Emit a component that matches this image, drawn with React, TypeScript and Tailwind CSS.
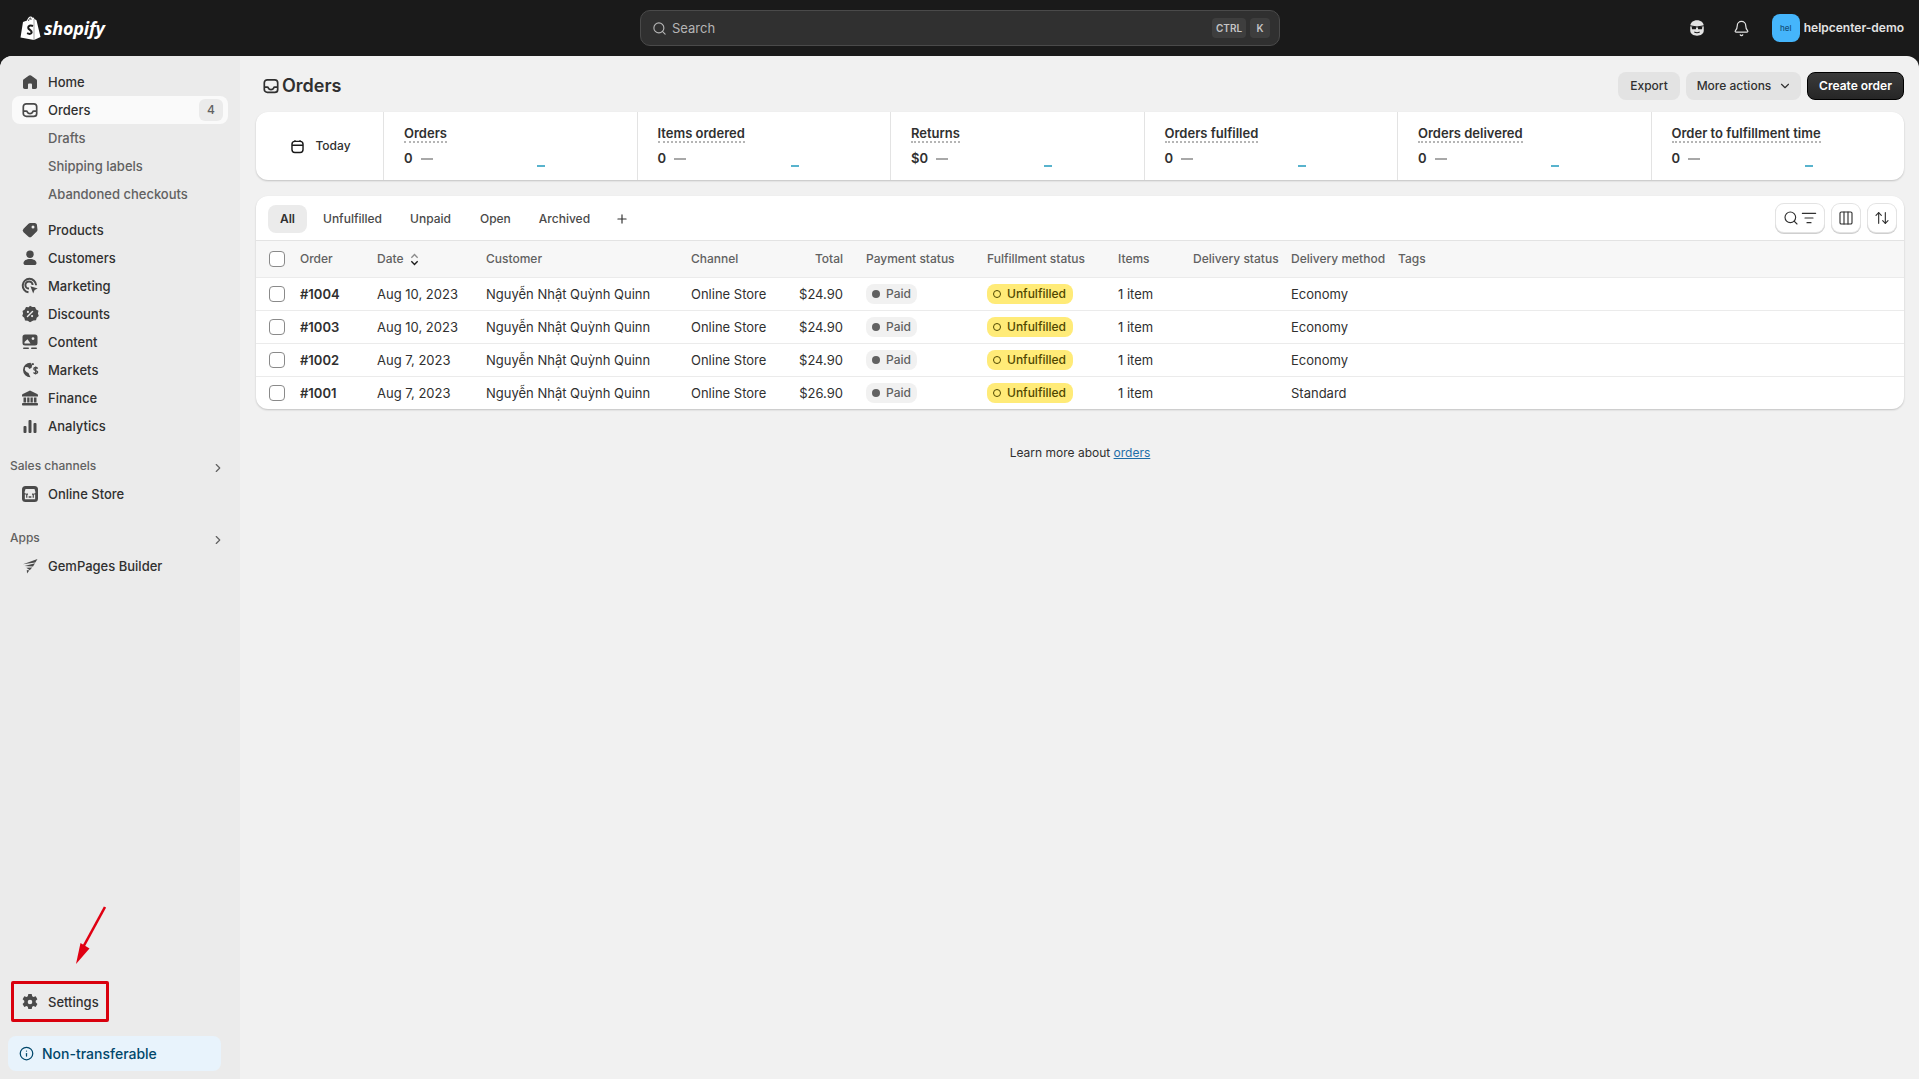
import React from "react";
import { Search, Bell, ChevronRight, ChevronDown, Plus, Info, ListFilter, Columns3, ArrowUpDown } from "lucide-react";

type IconProps = { className?: string };

const HomeIcon = ({ className }: IconProps) => (
  <svg viewBox="0 0 20 20" className={className} fill="currentColor">
    <path d="M11.030 3.560a1.750 1.750 0 0 0-2.060 0l-5.250 3.810A1.750 1.750 0 0 0 3 8.790v6.460C3 16.220 3.780 17 4.750 17h2.500c.410 0 .750-.340.750-.750v-3.500c0-.690.560-1.250 1.250-1.250h1.500c.690 0 1.250.560 1.250 1.250v3.500c0 .410.340.750.750.750h2.500c.970 0 1.750-.780 1.750-1.750V8.790c0-.560-.270-1.090-.720-1.420z" />
  </svg>
);
const OrdersIcon = ({ className }: IconProps) => (
  <svg viewBox="0 0 20 20" className={className} fill="none" stroke="currentColor" strokeWidth="1.700">
    <rect x="3.300" y="3.800" width="13.400" height="12.600" rx="3" />
    <path d="M3.500 11.200h2.800c.600 0 .900.400 1.100.900.400 1 1.400 1.600 2.600 1.600s2.200-.600 2.600-1.600c.200-.500.500-.900 1.100-.900h2.800" />
  </svg>
);
const TagIcon = ({ className }: IconProps) => (
  <svg viewBox="0 0 20 20" className={className} fill="currentColor">
    <path fillRule="evenodd" d="M17 5.500A2.500 2.500 0 0 0 14.500 3h-4.200c-.660 0-1.300.260-1.770.730l-5 5a2.500 2.500 0 0 0 0 3.540l4.700 4.200a2.500 2.500 0 0 0 3.540 0l5-5c.470-.470.730-1.100.730-1.770zM13 8.500a1.500 1.500 0 1 0 0-3 1.500 1.500 0 0 0 0 3z" />
  </svg>
);
const PersonIcon = ({ className }: IconProps) => (
  <svg viewBox="0 0 20 20" className={className} fill="currentColor">
    <circle cx="10" cy="6.200" r="3.700" />
    <path d="M3.500 15.200c0-2.600 2.900-4.200 6.500-4.200s6.500 1.600 6.500 4.200c0 1.200-.900 1.800-2 1.800h-9c-1.100 0-2-.600-2-1.800z" />
  </svg>
);
const MarketingIcon = ({ className }: IconProps) => (
  <svg viewBox="0 0 20 20" className={className} fill="none" stroke="currentColor" strokeWidth="2">
    <path d="M8.500 16.200a6.700 6.700 0 1 1 7.600-7" />
    <path d="M9 12.600a3.600 3.600 0 1 1 3.600-3.600" />
    <path d="M10.400 10.200l7.300 2.400-3.100 1.500-1.400 3.300z" fill="currentColor" stroke="none" />
  </svg>
);
const DiscountIcon = ({ className }: IconProps) => (
  <svg viewBox="0 0 20 20" className={className}>
    <path fill="currentColor" d="M10 1.800l2.300 1.300 2.700-.100 1.200 2.500 2.300 1.300-.600 2.700.900 2.500-2.100 1.700-.700 2.600-2.700.300L10 18.200l-2.300-1.500-2.700-.300-.700-2.600-2.100-1.700.900-2.500-.600-2.700 2.300-1.300 1.200-2.500 2.700.100z" />
    <path d="M12.500 7.500l-5 5" stroke="#ebebeb" strokeWidth="1.500" strokeLinecap="round" />
    <circle cx="7.900" cy="7.900" r="1.100" fill="#ebebeb" />
    <circle cx="12.100" cy="12.100" r="1.100" fill="#ebebeb" />
  </svg>
);
const ContentIcon = ({ className }: IconProps) => (
  <svg viewBox="0 0 20 20" className={className} fill="currentColor">
    <path fillRule="evenodd" d="M5 2.500h10A2.500 2.500 0 0 1 17.500 5v6a2.500 2.500 0 0 1-2.500 2.500H5A2.500 2.500 0 0 1 2.500 11V5A2.500 2.500 0 0 1 5 2.500zm8 2.700a1.400 1.400 0 1 0 0 2.800 1.400 1.400 0 0 0 0-2.800zM4.500 11.500h6L7.500 7.200l-3 2.800z" />
    <rect x="3" y="15.500" width="6" height="1.600" rx=".800" />
    <rect x="11" y="15.500" width="6" height="1.600" rx=".800" />
  </svg>
);
const MarketsIcon = ({ className }: IconProps) => (
  <svg viewBox="0 0 20 20" className={className} fill="currentColor">
    <path d="M10.500 2.800A7.300 7.300 0 0 0 3 10a7.300 7.300 0 0 0 7.500 7.200l-.900-1.600-1.100-2.500-2-1-1.700-2.200.500-3 2.700.400 1.400 1.800 2.200-1.300.500-2.500z" />
    <path d="M11.500 5.600a5 5 0 0 1 2.500-.900V3.500a7 7 0 0 0-2.200-.500z" />
    <path d="M17.600 8.600c-.400-.800-1-1.100-1.900-1.100-1.100 0-1.900.600-1.900 1.500 0 2 3.900 1.100 3.900 3.100 0 .900-.800 1.500-2 1.500-1 0-1.700-.400-2.100-1.200M15.700 6.400v8.200" fill="none" stroke="currentColor" strokeWidth="1.300" />
  </svg>
);
const FinanceIcon = ({ className }: IconProps) => (
  <svg viewBox="0 0 20 20" className={className} fill="currentColor">
    <path d="M10 2.500l7.200 3.600c.500.300.800.700.800 1.200V8.500H2V7.300c0-.500.300-.900.800-1.200z" />
    <rect x="3.500" y="9.500" width="2.600" height="5" />
    <rect x="7.200" y="9.500" width="2.300" height="5" />
    <rect x="10.500" y="9.500" width="2.300" height="5" />
    <rect x="13.900" y="9.500" width="2.600" height="5" />
    <rect x="2" y="15" width="16" height="2.500" rx=".800" />
  </svg>
);
const AnalyticsIcon = ({ className }: IconProps) => (
  <svg viewBox="0 0 20 20" className={className} fill="currentColor">
    <rect x="3.500" y="10" width="3" height="7" rx=".900" />
    <rect x="8.500" y="4" width="3" height="13" rx=".900" />
    <rect x="13.500" y="7" width="3" height="10" rx=".900" />
  </svg>
);
const StoreIcon = ({ className }: IconProps) => (
  <svg viewBox="0 0 20 20" className={className}>
    <rect x="2" y="2" width="16" height="16" rx="3.500" fill="currentColor" />
    <path d="M5.500 5h9l1 3.200a1.700 1.700 0 0 1-3 .800 2 2 0 0 1-5 0 1.700 1.700 0 0 1-3-.800z" fill="#ebebeb" />
    <path d="M5.500 10.500v4h9v-4M8 14.500v-2.800h4v2.800" fill="none" stroke="#ebebeb" strokeWidth="1.300" />
  </svg>
);
const GemIcon = ({ className }: IconProps) => (
  <svg viewBox="0 0 20 20" className={className} fill="currentColor">
    <path d="M17.500 3l-2.200 3.400L3 8.200z" />
    <path d="M15 7.300L13 10.600 4.500 10z" />
    <path d="M12.200 11.400l-2.400 2.800-3.500-2.400z" />
    <path d="M9.300 14.600L7 17.500l-.200-3.600z" />
  </svg>
);
const GearIcon = ({ className }: IconProps) => (
  <svg viewBox="0 0 20 20" className={className} fill="currentColor">
    <path fillRule="evenodd" d="M8.300 2h3.400l.500 2.300 1.300.700 2.200-.800 1.700 3-1.700 1.600v1.500l1.700 1.600-1.700 3-2.200-.800-1.300.700-.500 2.200H8.300l-.500-2.200-1.300-.700-2.200.800-1.700-3 1.700-1.600V8.800l-1.700-1.600 1.700-3 2.200.8 1.300-.7zM10 7.700a2.300 2.300 0 1 0 0 4.600 2.300 2.300 0 0 0 0-4.600z" />
  </svg>
);
const CalendarIcon = ({ className }: IconProps) => (
  <svg viewBox="0 0 20 20" className={className} fill="none" stroke="currentColor" strokeWidth="1.700">
    <rect x="3.500" y="4" width="13" height="13" rx="3.400" />
    <path d="M3.500 8.500h13M7 2.500v2M13 2.500v2" />
  </svg>
);
const SidekickIcon = ({ className }: IconProps) => (
  <svg viewBox="0 0 20 20" className={className}>
    <path fill="currentColor" d="M2.500 8c0-4 3.200-6.500 7.500-6.500S17.500 4 17.500 8v5c0 3.200-3.200 5.500-7.500 5.500S2.500 16.200 2.500 13z" />
    <path d="M2 7.500l8 1.300 8-1.300" stroke="#1a1a1a" strokeWidth="1.200" fill="none" />
    <rect x="4.300" y="8.300" width="4.600" height="3.200" rx="1" fill="#1a1a1a" />
    <rect x="11.100" y="8.300" width="4.600" height="3.200" rx="1" fill="#1a1a1a" />
    <path d="M7 14.500c2 1 4 1 6 0" stroke="#1a1a1a" strokeWidth="1.300" fill="none" />
  </svg>
);
const ShopifyBag = () => (
  <svg viewBox="0 0 21 24" className="h-6 w-[21px]">
    <path fill="#fff" d="M3 6l4-1.400C7.600 2.300 9 .5 10.600.5c1 0 1.700.7 2 1.300l1-.2.900 1.400 2 1.300L20.500 21 14 24 .5 21.500z" />
    <path d="M8.500 5c.3-1.500 1-2.800 2-3M11 4c0-1-.2-1.800-.6-2.200" stroke="#1a1a1a" strokeWidth=".8" fill="none" />
    <path d="M13 10c-2.600-1.100-5-.2-4.800 1.800.2 2 3.800 2.300 3.500 4.600-.2 1.500-2.300 2-4.600.8" stroke="#1a1a1a" strokeWidth="2" fill="none" />
    <path d="M14 3v21" stroke="#1a1a1a" strokeWidth=".4" />
  </svg>
);

const NavItem = ({ icon: Icon, label, active, badge }: { icon: React.FC<IconProps>; label: string; active?: boolean; badge?: string }) => (
  <div className={`mx-3 flex h-7 items-center rounded-lg pr-[5px] ${active ? "bg-[#fafafa]" : ""}`}>
    <div className="flex w-9 justify-center"><Icon className="h-5 w-5 text-[#4a4a4a]" /></div>
    <span className="pt-px text-[13px] font-medium text-[#303030]">{label}</span>
    {badge && <span className="ml-auto flex h-[22px] w-6 items-center justify-center rounded-md bg-[#ebebeb] text-xs font-medium text-[#616161]">{badge}</span>}
  </div>
);
const SubItem = ({ label }: { label: string }) => (
  <div className="ml-12 flex h-7 items-center pt-px text-[13px] font-medium text-[#616161]">{label}</div>
);
const SectionHead = ({ label }: { label: string }) => (
  <div className="flex h-7 items-center pl-[10px] pr-[15px] text-xs font-medium text-[#616161]">
    <span>{label}</span>
    <ChevronRight className="ml-auto mt-[3px] h-[14px] w-[14px] text-[#616161]" strokeWidth={2} />
  </div>
);

const stats = [
  { t: "Orders", v: "0" },
  { t: "Items ordered", v: "0" },
  { t: "Returns", v: "$0" },
  { t: "Orders fulfilled", v: "0" },
  { t: "Orders delivered", v: "0" },
  { t: "Order to fulfillment time", v: "0" },
];

const rows = [
  { id: "#1004", date: "Aug 10, 2023", total: "$24.90", method: "Economy" },
  { id: "#1003", date: "Aug 10, 2023", total: "$24.90", method: "Economy" },
  { id: "#1002", date: "Aug 7, 2023", total: "$24.90", method: "Economy" },
  { id: "#1001", date: "Aug 7, 2023", total: "$26.90", method: "Standard" },
];

const gridCols = "grid grid-cols-[44px_77px_109px_205px_100px_52px_144px_131px_75px_98px_107px_1fr] items-center";

const Checkbox = () => (
  <div className="ml-[13px] h-4 w-4 rounded-[4px] border border-[#8a8a8a] bg-white" />
);

const IconBtn = ({ children, className }: { children: React.ReactNode; className: string }) => (
  <div className={`flex h-7 items-center justify-center rounded-lg bg-white text-[#303030] shadow-[0_0_0_1px_#e3e3e3,0_1px_0_1px_#cfcfcf] ${className}`}>{children}</div>
);

export default function App() {
  return (
    <div className="flex h-[1079px] w-[1919px] flex-col overflow-hidden bg-[#1a1a1a] font-['Inter',sans-serif] text-[13px] text-[#303030]">
      <header className="flex h-14 shrink-0 items-center pl-5 pr-[15px]">
        <div className="flex w-[620px] items-center gap-[3px]">
          <ShopifyBag />
          <span className="font-['Open_Sans',sans-serif] text-[18px] font-bold italic leading-none tracking-[-0.2px] text-white">shopify</span>
        </div>
        <div className="flex h-9 w-[640px] items-center rounded-[10px] border border-[#4a4a4a] bg-[#303030] pl-[11px] pr-[9px]">
          <Search className="h-[15px] w-[15px] text-[#b5b5b5]" strokeWidth={1.8} />
          <span className="ml-[5px] pt-px text-[13px] text-[#b5b5b5]">Search</span>
          <div className="ml-auto flex gap-1">
            <span className="flex h-5 w-[34px] items-center justify-center rounded bg-[#3e3e3e] text-[10px] font-semibold text-[#c4c4c4]">CTRL</span>
            <span className="flex h-5 w-5 items-center justify-center rounded bg-[#3e3e3e] text-[10px] font-semibold text-[#c4c4c4]">K</span>
          </div>
        </div>
        <div className="ml-auto flex items-center">
          <SidekickIcon className="h-[18px] w-[18px] text-[#e3e3e3]" />
          <Bell className="ml-[27px] h-[17px] w-[17px] text-[#e3e3e3]" strokeWidth={1.7} />
          <div className="ml-[22px] flex h-7 w-7 items-center justify-center rounded-lg bg-[#45b5fb] text-[8px] font-medium text-[#14507a]">hel</div>
          <span className="ml-[4px] text-xs font-semibold text-[#e3e3e3]">helpcenter-demo</span>
        </div>
      </header>

      <div className="flex min-h-0 flex-1 overflow-hidden rounded-t-xl bg-[#f1f1f1]">
        <aside className="flex w-60 shrink-0 flex-col justify-between bg-[#ebebeb] pb-2 pt-3">
          <nav>
            <NavItem icon={HomeIcon} label="Home" />
            <NavItem icon={OrdersIcon} label="Orders" active badge="4" />
            <SubItem label="Drafts" />
            <SubItem label="Shipping labels" />
            <SubItem label="Abandoned checkouts" />
            <div className="mt-2">
              <NavItem icon={TagIcon} label="Products" />
              <NavItem icon={PersonIcon} label="Customers" />
              <NavItem icon={MarketingIcon} label="Marketing" />
              <NavItem icon={DiscountIcon} label="Discounts" />
              <NavItem icon={ContentIcon} label="Content" />
              <NavItem icon={MarketsIcon} label="Markets" />
              <NavItem icon={FinanceIcon} label="Finance" />
              <NavItem icon={AnalyticsIcon} label="Analytics" />
            </div>
            <div className="mt-3">
              <SectionHead label="Sales channels" />
              <NavItem icon={StoreIcon} label="Online Store" />
            </div>
            <div className="mt-4">
              <SectionHead label="Apps" />
              <NavItem icon={GemIcon} label="GemPages Builder" />
            </div>
          </nav>
          <div>
            <div className="relative mb-5">
              <NavItem icon={GearIcon} label="Settings" />
              <div className="absolute left-[11px] top-[-7px] h-[41px] w-[98px] rounded-[2px] border-[3px] border-[#d9000d]" />
              <svg className="absolute left-[70px] top-[-83px] h-[62px] w-[40px]" viewBox="0 0 40 62">
                <path d="M35 2L11 46" stroke="#e00012" strokeWidth="2.600" fill="none" />
                <path d="M6 59l4.500-21 9 5.500z" fill="#e00012" />
              </svg>
            </div>
            <div className="mx-2 flex h-[35px] w-[213px] items-center rounded-lg bg-[#e8f3fc] pl-[11px] text-sm font-medium text-[#00476b]">
              <Info className="h-[15px] w-[15px]" strokeWidth={2} />
              <span className="ml-[8px]">Non-transferable</span>
            </div>
          </div>
        </aside>

        <main className="min-w-0 flex-1 pl-4 pr-[15px] pt-4">
          <div className="mb-3 flex h-7 items-center">
            <OrdersIcon className="ml-[5px] h-5 w-5 text-[#303030]" />
            <h1 className="ml-px text-lg font-semibold text-[#303030]">Orders</h1>
            <div className="ml-auto flex gap-[6px]">
              <button className="h-7 w-[62px] rounded-lg bg-[#e3e3e3] text-xs font-medium text-[#303030]">Export</button>
              <button className="flex h-7 w-[115px] items-center justify-center gap-[7px] rounded-lg bg-[#e3e3e3] pl-[2px] text-xs font-medium text-[#303030]">
                More actions <ChevronDown className="h-[14px] w-[14px]" strokeWidth={2} />
              </button>
              <button className="h-7 w-[97px] rounded-lg border border-black bg-gradient-to-b from-[#3b3b3b] to-[#262626] text-xs font-semibold text-white">Create order</button>
            </div>
          </div>

          <section className="mb-4 flex h-[68px] overflow-hidden rounded-xl bg-white shadow-[0_1px_2px_rgba(0,0,0,0.2)]">
            <div className="flex w-[127px] shrink-0 items-center justify-center gap-[9px] pl-px">
              <CalendarIcon className="h-[17px] w-[17px] text-[#1a1a1a]" />
              <span className="text-xs font-medium">Today</span>
            </div>
            {stats.map((s) => (
              <div key={s.t} className="flex-1 border-l border-[#e3e3e3] pl-5 pt-3">
                <div className="inline-block h-[19px] border-b-2 border-dotted border-[#b5b5b5] text-[13px] font-semibold leading-[18px] text-[#303030]">{s.t}</div>
                <div className="mt-[6px] flex h-[18px]">
                  <div className="flex w-[133px] items-center text-[13px] font-semibold">
                    <span>{s.v}</span>
                    <span className="ml-2 h-[2px] w-3 bg-[#a8a8a8]" />
                  </div>
                  <span className="mt-[15px] h-[2px] w-2 bg-[#58b3cd]" />
                </div>
              </div>
            ))}
          </section>

          <section className="overflow-hidden rounded-xl bg-white shadow-[0_1px_2px_rgba(0,0,0,0.2)]">
            <div className="flex h-[45px] items-center border-b border-[#e3e3e3] pl-3 pr-2">
              <div className="flex items-center gap-1 pt-px text-xs font-medium text-[#4a4a4a]">
                <span className="flex h-7 items-center rounded-lg bg-[#ebebeb] px-3 font-semibold text-[#303030]">All</span>
                <span className="flex h-7 items-center px-3">Unfulfilled</span>
                <span className="flex h-7 items-center px-3">Unpaid</span>
                <span className="ml-px flex h-7 items-center px-3">Open</span>
                <span className="flex h-7 items-center px-3">Archived</span>
                <Plus className="ml-[9px] h-[14px] w-[14px] text-[#303030]" strokeWidth={2} />
              </div>
              <div className="ml-auto flex gap-2">
                <IconBtn className="w-12 gap-[2px]">
                  <Search className="h-4 w-4" strokeWidth={1.7} />
                  <ListFilter className="h-4 w-4" strokeWidth={1.7} />
                </IconBtn>
                <IconBtn className="w-7"><Columns3 className="h-4 w-4" strokeWidth={1.7} /></IconBtn>
                <IconBtn className="w-7"><ArrowUpDown className="h-4 w-4" strokeWidth={1.7} /></IconBtn>
              </div>
            </div>
            <div className={`${gridCols} h-9 bg-[#f7f7f7] text-xs font-medium text-[#616161]`}>
              <Checkbox />
              <span>Order</span>
              <span className="flex items-center gap-[6px]">
                Date
                <svg viewBox="0 0 10 14" className="h-[13px] w-[9px]" fill="none" strokeWidth="1.500">
                  <path d="M1.500 5L5 1.500 8.500 5" stroke="#8a8a8a" />
                  <path d="M1.500 9L5 12.500 8.500 9" stroke="#1a1a1a" />
                </svg>
              </span>
              <span>Customer</span>
              <span>Channel</span>
              <span className="text-right">Total</span>
              <span className="pl-[23px]">Payment status</span>
              <span>Fulfillment status</span>
              <span>Items</span>
              <span>Delivery status</span>
              <span>Delivery method</span>
              <span>Tags</span>
            </div>
            {rows.map((r) => (
              <div key={r.id} className={`${gridCols} h-[33px] border-t border-[#ebebeb] text-[13px] text-[#303030]`}>
                <Checkbox />
                <span className="pt-px font-semibold">{r.id}</span>
                <span className="pt-px">{r.date}</span>
                <span className="pt-px">Nguyễn Nhật Quỳnh Quinn</span>
                <span className="pt-px">Online Store</span>
                <span className="pt-px text-right">{r.total}</span>
                <span className="pl-[23px]">
                  <span className="inline-flex h-5 w-[51px] items-center rounded-lg bg-[#f1f1f1] pl-[6px] text-xs font-medium text-[#616161]">
                    <span className="mr-[6px] h-2 w-2 rounded-full bg-[#616161]" />Paid
                  </span>
                </span>
                <span>
                  <span className="inline-flex h-5 w-[86px] items-center rounded-lg bg-[#ffeb78] pl-[6px] text-xs font-medium text-[#4f4700]">
                    <span className="mr-[6px] h-2 w-2 rounded-full border-[1.5px] border-[#4f4700]" />Unfulfilled
                  </span>
                </span>
                <span className="pt-px">1 item</span>
                <span />
                <span className="pt-px">{r.method}</span>
                <span />
              </div>
            ))}
          </section>

          <p className="mt-[35px] text-center text-xs leading-[18px] text-[#303030]">
            Learn more about <a className="text-[#1f6ea8] underline">orders</a>
          </p>
        </main>
      </div>
    </div>
  );
}
